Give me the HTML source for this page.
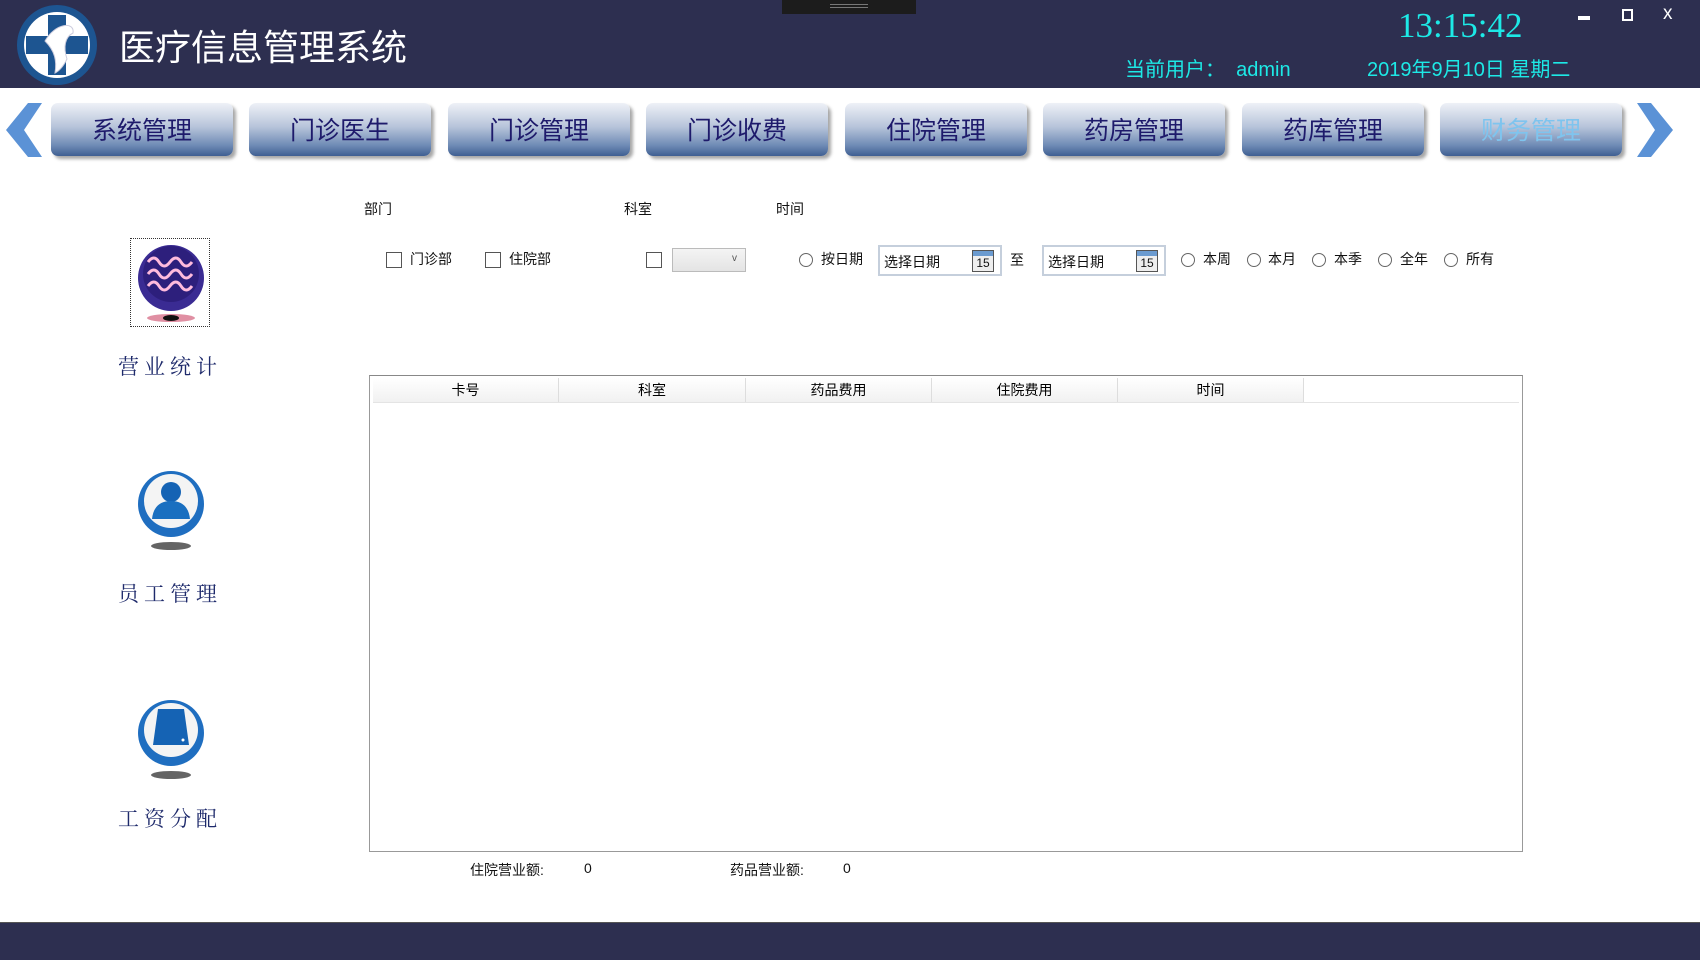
<!DOCTYPE html>
<html><head><meta charset="utf-8"><style>
*{margin:0;padding:0;box-sizing:border-box}
body{width:1700px;height:960px;position:relative;background:#fff;font-family:"Liberation Sans","Noto Sans CJK SC",sans-serif;overflow:hidden}
.abs{position:absolute}
.hdr{left:0;top:0;width:1700px;height:88px;background:#2d2f50}
.ftr{left:0;top:922px;width:1700px;height:38px;background:#2d2f50;border-top:1px solid #555}
.btn{position:absolute;top:103px;width:182px;height:53px;border-radius:7px;background:linear-gradient(#eef1f7 0%,#b7c4da 45%,#6f8bb5 80%,#3f5f92 100%);box-shadow:3px 3px 3px rgba(0,0,0,.35);color:#1e1a6b;font-size:25px;text-align:center;line-height:57px}
.lbl{font-size:14px;color:#111}
.cb{position:absolute;width:16px;height:16px;border:1px solid #555;background:#fff}
.rd{position:absolute;width:14px;height:14px;border:1px solid #666;border-radius:50%;background:#fff}
.date{position:absolute;top:245px;width:124px;height:31px;border:2px solid #c5cfdc;font-size:14px;padding:5px 0 0 4px;color:#111}
.cal{position:absolute;right:6px;top:3px;width:22px;height:22px;border:1px solid #555;background:linear-gradient(#6b9bd0 0 5px,#eee 5px);font-size:12px;text-align:center;line-height:24px}
.side{position:absolute;width:120px;text-align:center;font-family:"Liberation Serif","Noto Serif CJK SC",serif;font-size:21px;letter-spacing:5px;color:#1e2a6b}
.th{position:absolute;top:378px;height:24px;font-size:14px;text-align:center;line-height:24px;border-right:1px solid #ddd;background:linear-gradient(#fff,#f1f1f1)}
</style></head><body>
<div class="abs hdr"></div>
<div class="abs" style="left:782px;top:0;width:134px;height:14px;background:#1c1c1c"><div style="margin:4px auto;width:38px;height:4px;border-top:1px solid #777;border-bottom:1px solid #777"></div></div>
<svg class="abs" style="left:15px;top:3px" width="84" height="84" viewBox="0 0 84 84">
<circle cx="42" cy="42" r="40" fill="#1d5591"/><circle cx="42" cy="42" r="33" fill="#fff"/>
<rect x="33" y="12" width="18" height="60" fill="#1d5591"/><rect x="11" y="33" width="62" height="18" fill="#1d5591"/>
<path d="M30 38 C40 20 60 18 58 30 C50 34 48 44 52 56 C48 64 44 68 40 70 C42 58 40 48 30 38Z" fill="#fff" stroke="#ccd" stroke-width="1"/>
</svg>
<div class="abs" style="left:119px;top:22px;color:#fff;font-size:36px;font-family:'Noto Sans CJK SC',sans-serif;line-height:46px">医疗信息管理系统</div>
<div class="abs" style="left:1398px;top:4px;color:#1de9e6;font-size:35px;font-family:'Liberation Serif',serif;line-height:44px">13:15:42</div>
<div class="abs" style="left:1578px;top:16px;width:12px;height:4px;background:#fff"></div>
<div class="abs" style="left:1622px;top:9px;width:11px;height:12px;border:2px solid #fff;border-top-width:2px"></div>
<div class="abs" style="left:1663px;top:3px;color:#fff;font-size:19px">x</div>
<div class="abs" style="left:1125px;top:53px;color:#1de9e6;font-size:20px">当前用户：&nbsp; admin</div>
<div class="abs" style="left:1367px;top:53px;color:#1de9e6;font-size:20px">2019年9月10日 星期二</div>
<svg class="abs" style="left:6px;top:103px" width="36" height="54"><polygon points="36,0 22,0 0,27 22,54 36,54 18,27" fill="#5b92d6"/></svg>
<svg class="abs" style="left:1637px;top:103px" width="36" height="54"><polygon points="0,0 14,0 36,27 14,54 0,54 18,27" fill="#5b92d6"/></svg>
<div class="btn" style="left:51px">系统管理</div>
<div class="btn" style="left:249px">门诊医生</div>
<div class="btn" style="left:448px">门诊管理</div>
<div class="btn" style="left:646px">门诊收费</div>
<div class="btn" style="left:845px">住院管理</div>
<div class="btn" style="left:1043px">药房管理</div>
<div class="btn" style="left:1242px">药库管理</div>
<div class="btn" style="left:1440px;color:#7fc4ee">财务管理</div>
<div class="abs" style="left:130px;top:238px;width:80px;height:89px;border:1px dotted #333"></div>
<svg class="abs" style="left:136px;top:240px" width="70" height="86"><ellipse cx="35" cy="78" rx="24" ry="4" fill="#c46" opacity=".6"/><ellipse cx="35" cy="78" rx="8" ry="3" fill="#111"/><circle cx="35" cy="38" r="33" fill="#3a2b93"/><circle cx="35" cy="34" r="28" fill="#2d1f7c"/>
<g fill="none" stroke="#fbd" stroke-width="3"><path d="M12 22 q6-8 11 0 t11 0 t11 0 t11 0"/><path d="M12 34 q6-8 11 0 t11 0 t11 0 t11 0"/><path d="M12 46 q6-8 11 0 t11 0 t11 0 t11 0"/></g></svg>
<div class="side" style="left:110px;top:351px">营业统计</div>
<svg class="abs" style="left:136px;top:464px" width="70" height="90"><ellipse cx="35" cy="82" rx="20" ry="4" fill="#222" opacity=".7"/><circle cx="35" cy="40" r="33" fill="#1f6ec0"/><circle cx="35" cy="37" r="27" fill="#f4f4f4"/><circle cx="35" cy="28" r="10" fill="#1563b4"/><path d="M16 55 q2-18 19-18 q17 0 19 18z" fill="#1a6fc0"/></svg>
<div class="side" style="left:110px;top:578px">员工管理</div>
<svg class="abs" style="left:136px;top:693px" width="70" height="90"><ellipse cx="35" cy="82" rx="20" ry="4" fill="#222" opacity=".7"/><circle cx="35" cy="40" r="33" fill="#1f6ec0"/><circle cx="35" cy="37" r="27" fill="#f4f4f4"/><path d="M22 16 h26 l5 36 h-36z" fill="#1563b4"/><circle cx="47" cy="47" r="1.5" fill="#fff"/></svg>
<div class="side" style="left:110px;top:803px">工资分配</div>
<div class="abs lbl" style="left:364px;top:199px">部门</div>
<div class="abs lbl" style="left:624px;top:199px">科室</div>
<div class="abs lbl" style="left:776px;top:199px">时间</div>
<div class="cb" style="left:386px;top:252px"></div><div class="abs lbl" style="left:410px;top:249px">门诊部</div>
<div class="cb" style="left:485px;top:252px"></div><div class="abs lbl" style="left:509px;top:249px">住院部</div>
<div class="cb" style="left:646px;top:252px"></div>
<div class="abs" style="left:672px;top:248px;width:74px;height:24px;border:1px solid #bbb;background:linear-gradient(#f4f4f4,#e4e4e4);font-size:10px;color:#555;text-align:right;padding:4px 8px 0 0">v</div>
<div class="rd" style="left:799px;top:253px"></div><div class="abs lbl" style="left:821px;top:249px">按日期</div>
<div class="date" style="left:878px">选择日期<div class="cal">15</div></div>
<div class="abs lbl" style="left:1010px;top:250px">至</div>
<div class="date" style="left:1042px">选择日期<div class="cal">15</div></div>
<div class="rd" style="left:1181px;top:253px"></div><div class="abs lbl" style="left:1203px;top:249px">本周</div>
<div class="rd" style="left:1247px;top:253px"></div><div class="abs lbl" style="left:1268px;top:249px">本月</div>
<div class="rd" style="left:1312px;top:253px"></div><div class="abs lbl" style="left:1334px;top:249px">本季</div>
<div class="rd" style="left:1378px;top:253px"></div><div class="abs lbl" style="left:1400px;top:249px">全年</div>
<div class="rd" style="left:1444px;top:253px"></div><div class="abs lbl" style="left:1466px;top:249px">所有</div>
<div class="abs" style="left:369px;top:375px;width:1154px;height:477px;border:1px solid #999;border-top-color:#888"></div>
<div class="abs" style="left:373px;top:402px;width:1146px;height:1px;background:#e4e4e4"></div>
<div class="th" style="left:373px;width:186px">卡号</div>
<div class="th" style="left:559px;width:187px">科室</div>
<div class="th" style="left:746px;width:186px">药品费用</div>
<div class="th" style="left:932px;width:186px">住院费用</div>
<div class="th" style="left:1118px;width:186px">时间</div>
<div class="abs lbl" style="left:470px;top:860px">住院营业额:</div><div class="abs lbl" style="left:584px;top:860px">0</div>
<div class="abs lbl" style="left:730px;top:860px">药品营业额:</div><div class="abs lbl" style="left:843px;top:860px">0</div>
<div class="abs ftr"></div>
</body></html>
